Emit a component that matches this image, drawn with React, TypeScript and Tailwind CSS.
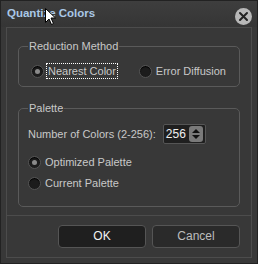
import React from "react";

function Radio({ checked, label, focus }: { checked?: boolean; label: string; focus?: boolean }) {
  return (
    <div className="flex items-center gap-[3px] whitespace-nowrap">
      <div className="w-[13px] h-[13px] rounded-full bg-[#1c1c1c] border border-[#555] flex items-center justify-center shadow-[inset_0_1px_1px_#000]">
        {checked && <div className="w-[5px] h-[5px] rounded-full bg-[#8a8a8a]" />}
      </div>
      <span
        className={
          "px-[1px] leading-[14px] text-[#c8c8c8] " +
          (focus ? "outline outline-1 outline-dotted outline-white" : "")
        }
      >
        {label}
      </span>
    </div>
  );
}

export default function App() {
  return (
    <div
      className="w-[258px] h-[264px] bg-[#383838] border border-[#222] relative text-[11px] select-none whitespace-nowrap"
      style={{ fontFamily: "'Liberation Sans', Arial, sans-serif" }}
    >
      {/* Title bar */}
      <div className="h-[26px] flex items-center justify-between pl-[6px] pr-[5px] bg-gradient-to-b from-[#3e3e3e] to-[#353535]">
        <span className="font-bold text-[11.5px] text-[#a9c7e6]">Quantize Colors</span>
        <div className="w-[17px] h-[17px] rounded-full bg-[#b8b8b8] flex items-center justify-center mt-[4px]">
          <svg width="11" height="11" viewBox="0 0 11 11">
            <path d="M2 2 L9 9 M9 2 L2 9" stroke="#222" strokeWidth="2" strokeLinecap="round" />
          </svg>
        </div>
      </div>
      {/* Cursor */}
      <svg className="absolute left-[44px] top-[7px]" width="12" height="18" viewBox="0 0 12 18">
        <path d="M0.5 0.5 L0.5 14.5 L4 11 L6.5 16.5 L8.5 15.5 L6 10 L10.5 10 Z" fill="white" stroke="black" strokeWidth="1" />
      </svg>

      {/* Content */}
      <div className="mx-[5px] border border-[#4c4c4c] flex flex-col h-[231px]">
        <div className="border-b border-[#4c4c4c] h-[188px] px-[11px] pt-[11px] flex flex-col">
          <fieldset className="border border-[#5a5a5a] rounded-[5px] px-[9px] h-[48px]">
            <legend className="text-[#c8c8c8] px-[1px] leading-[14px]">Reduction Method</legend>
            <div className="flex items-center gap-[22px] pt-[11px] pl-[3px]">
              <Radio checked focus label="Nearest Color" />
              <Radio label="Error Diffusion" />
            </div>
          </fieldset>
          <fieldset className="border border-[#5a5a5a] rounded-[5px] px-[9px] h-[106px] mt-[14px]">
            <legend className="text-[#c8c8c8] px-[1px] leading-[14px]">Palette</legend>
            <div className="flex items-center pt-[9px]">
              <span className="text-[#c8c8c8]">Number of Colors (2-256):</span>
              <div className="ml-[7px] w-[43px] h-[20px] bg-[#1f1f1f] border border-[#555] rounded-[2px] flex items-center pl-[2px] pr-[2px]">
                <span className="text-[#f0f0f0] flex-1 text-[12px]">256</span>
                <div className="w-[14px] h-[16px] bg-[#7a7a7a] rounded-[3px] flex flex-col items-center justify-center gap-[2px]">
                  <svg width="8" height="4" viewBox="0 0 8 4"><path d="M0 4 L4 0 L8 4 Z" fill="#111" /></svg>
                  <svg width="8" height="4" viewBox="0 0 8 4"><path d="M0 0 L8 0 L4 4 Z" fill="#111" /></svg>
                </div>
              </div>
            </div>
            <div className="flex flex-col gap-[7px] mt-[11px]">
              <Radio checked label="Optimized Palette" />
              <Radio label="Current Palette" />
            </div>
          </fieldset>
        </div>
        <div className="flex-1 flex items-center justify-end gap-[6px] pr-[11px] pb-[1px]">
          <button className="w-[88px] h-[23px] rounded-[4px] bg-[#1f1f1f] border border-[#555] text-[#f2f2f2] text-[12px]">
            OK
          </button>
          <button className="w-[88px] h-[23px] rounded-[4px] bg-[#2a2a2a] border border-[#555] text-[#bdbdbd] text-[12px]">
            Cancel
          </button>
        </div>
      </div>
    </div>
  );
}
